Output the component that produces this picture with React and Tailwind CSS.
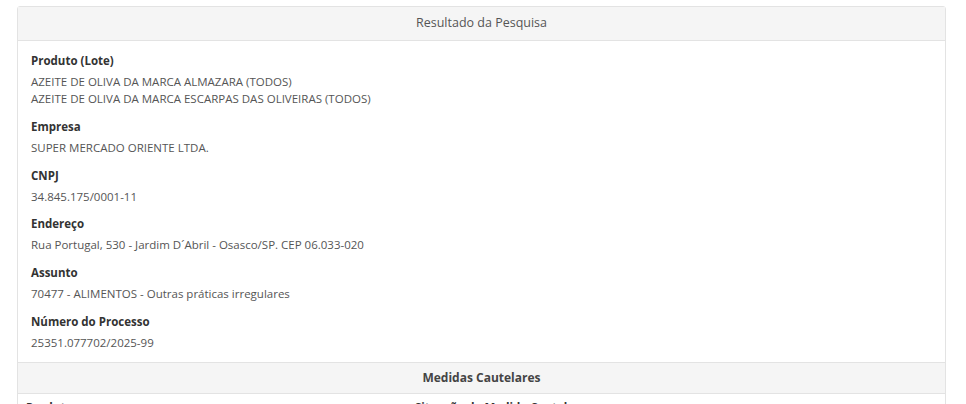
export default function App() {
  const fields = [
    { label: 'Produto (Lote)', values: ['AZEITE DE OLIVA DA MARCA ALMAZARA (TODOS)', 'AZEITE DE OLIVA DA MARCA ESCARPAS DAS OLIVEIRAS (TODOS)'] },
    { label: 'Empresa', values: ['SUPER MERCADO ORIENTE LTDA.'] },
    { label: 'CNPJ', values: ['34.845.175/0001-11'] },
    { label: 'Endereço', values: ['Rua Portugal, 530 - Jardim D´Abril - Osasco/SP. CEP 06.033-020'] },
    { label: 'Assunto', values: ['70477 - ALIMENTOS - Outras práticas irregulares'] },
    { label: 'Número do Processo', values: ['25351.077702/2025-99'] },
  ]

  return (
    <div className="min-h-screen bg-white pt-[6px] pl-[17px] pr-[20px] overflow-hidden" style={{ fontFamily: '"Open Sans", sans-serif' }}>
      <div className="border border-[#e3e3e3] rounded-t-[3px] bg-white">
        <div className="h-[34px] bg-[#f5f5f5] border-b border-[#e3e3e3] flex items-center justify-center text-[12.5px] text-[#555]">
          Resultado da Pesquisa
        </div>
        <div className="px-[13px] pt-[11px] pb-[11.5px] flex flex-col gap-[10.8px]">
          {fields.map((f) => (
            <div key={f.label}>
              <div className="text-[11.5px] font-bold text-[#333] leading-[17px] mb-[4px]">{f.label}</div>
              {f.values.map((v) => (
                <div key={v} className="text-[11.5px] text-[#555] leading-[17px]">{v}</div>
              ))}
            </div>
          ))}
        </div>
        <div className="h-[32px] bg-[#f5f5f5] border-y border-[#e3e3e3] flex items-center justify-center text-[12px] font-bold text-[#444]">
          Medidas Cautelares
        </div>
        <div className="grid grid-cols-[389px_1fr] px-[8px] pt-[5px] text-[11.5px] font-bold text-[#333] leading-[17px]">
          <div>Produto</div>
          <div>Situação da Medida Cautelar</div>
        </div>
      </div>
    </div>
  )
}
